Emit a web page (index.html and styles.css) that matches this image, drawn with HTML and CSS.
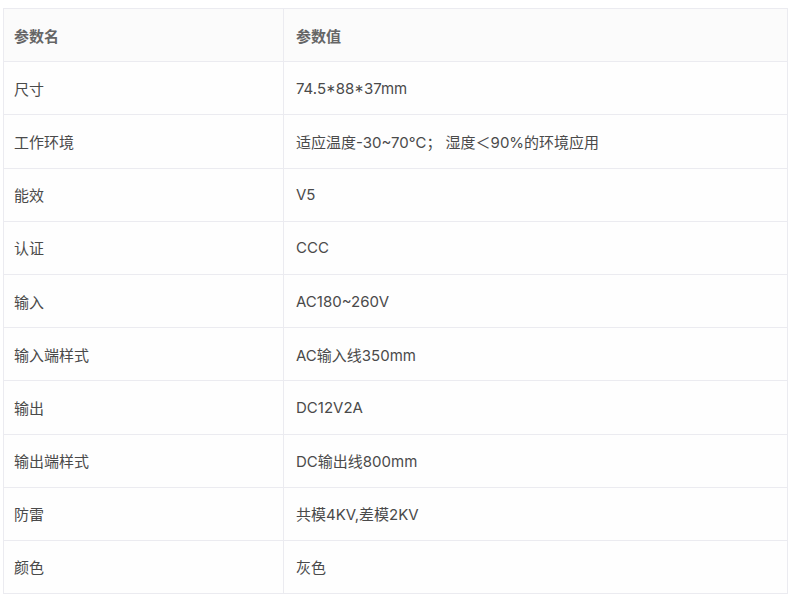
FILE: index.html
```html
<!DOCTYPE html>
<html lang="zh">
<head>
<meta charset="utf-8">
<link rel="stylesheet" href="styles.css">
</head>
<body>
<table class="spec">
  <thead>
    <tr><th class="name">参数名</th><th class="value">参数值</th></tr>
  </thead>
  <tbody>
    <tr><td>尺寸</td><td class="value">74.5*88*37mm</td></tr>
    <tr><td>工作环境</td><td class="value">适应温度-30~70℃； 湿度＜90%的环境应用</td></tr>
    <tr><td>能效</td><td class="value">V5</td></tr>
    <tr><td>认证</td><td class="value">CCC</td></tr>
    <tr><td>输入</td><td class="value">AC180~260V</td></tr>
    <tr><td>输入端样式</td><td class="value">AC输入线350mm</td></tr>
    <tr><td>输出</td><td class="value">DC12V2A</td></tr>
    <tr><td>输出端样式</td><td class="value">DC输出线800mm</td></tr>
    <tr><td>防雷</td><td class="value">共模4KV,差模2KV</td></tr>
    <tr><td>颜色</td><td class="value">灰色</td></tr>
  </tbody>
</table>
</body>
</html>
```
FILE: styles.css
```css
html, body {
  margin: 0;
  background: #ffffff;
}
body {
  font-family: Inter, "Noto Sans CJK SC", sans-serif;
  font-size: 15px;
  color: #4a4a4a;
}
.spec {
  margin: 8px 0 0 3px;
  width: 785px;
  border-collapse: collapse;
  table-layout: fixed;
}
.spec th, .spec td {
  border: 1px solid #ebebf0;
  height: 53.2px;
  padding: 0 10px;
  text-align: left;
  vertical-align: middle;
  box-sizing: border-box;
}
.spec .value {
  padding-left: 12px;
}
.spec th {
  font-weight: bold;
  background: #fbfbfb;
  color: #666666;
}
.spec .name {
  width: 280px;
}
.spec tbody td {
  background: #fefefe;
}
```
